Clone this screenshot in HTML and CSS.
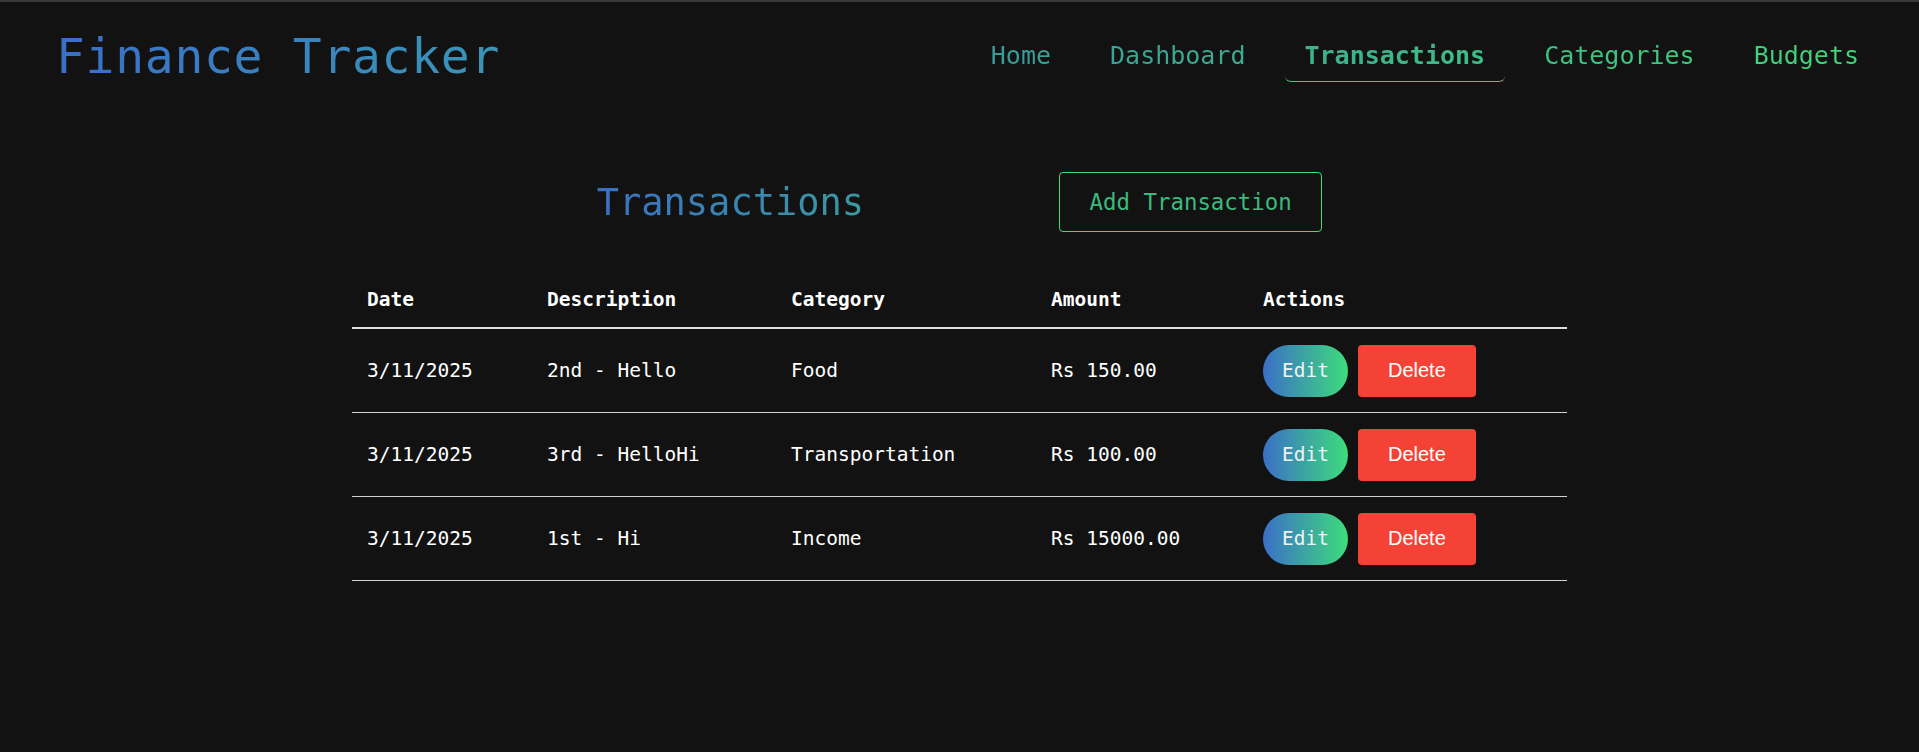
FILE: index.html
```html
<!DOCTYPE html>
<html lang="en">
<head>
<meta charset="utf-8">
<title>Finance Tracker</title>
<link rel="stylesheet" href="styles.css">
</head>
<body>
<header class="site-header">
  <h1 class="brand">Finance Tracker</h1>
  <nav class="nav">
    <a class="nav-link" href="#">Home</a>
    <a class="nav-link" href="#">Dashboard</a>
    <a class="nav-link active" href="#">Transactions</a>
    <a class="nav-link" href="#">Categories</a>
    <a class="nav-link" href="#">Budgets</a>
  </nav>
</header>
<main class="content">
  <div class="toolbar">
    <h2 class="page-title">Transactions</h2>
    <button class="add-btn">Add Transaction</button>
  </div>
  <table class="tx-table">
    <colgroup>
      <col class="c-date">
      <col class="c-desc">
      <col class="c-cat">
      <col class="c-amt">
      <col class="c-act">
    </colgroup>
    <thead>
      <tr><th>Date</th><th>Description</th><th>Category</th><th>Amount</th><th>Actions</th></tr>
    </thead>
    <tbody>
      <tr>
        <td>3/11/2025</td><td>2nd - Hello</td><td>Food</td><td>Rs 150.00</td>
        <td><div class="actions"><button class="edit-btn">Edit</button><button class="del-btn">Delete</button></div></td>
      </tr>
      <tr>
        <td>3/11/2025</td><td>3rd - HelloHi</td><td>Transportation</td><td>Rs 100.00</td>
        <td><div class="actions"><button class="edit-btn">Edit</button><button class="del-btn">Delete</button></div></td>
      </tr>
      <tr>
        <td>3/11/2025</td><td>1st - Hi</td><td>Income</td><td>Rs 15000.00</td>
        <td><div class="actions"><button class="edit-btn">Edit</button><button class="del-btn">Delete</button></div></td>
      </tr>
    </tbody>
  </table>
</main>
</body>
</html>
```
FILE: styles.css
```css
html, body {
  margin: 0;
  padding: 0;
}
body {
  background: #121212;
  border-top: 2px solid #3a3a3c;
  color: #ffffff;
  font-family: "DejaVu Sans Mono", "Liberation Mono", monospace;
  min-height: 750px;
}

.site-header {
  display: flex;
  justify-content: space-between;
  align-items: center;
  padding: 26px 40px 0 56px;
}

.brand {
  margin: 0;
  font-size: 48px;
  font-weight: normal;
  letter-spacing: 0.7px;
  background: linear-gradient(90deg, #3a6fc8 0%, #3a95b6 100%);
  -webkit-background-clip: text;
  background-clip: text;
  color: transparent;
}

.nav {
  display: flex;
  gap: 19px;
  background: linear-gradient(90deg, #3a9a9a 0%, #40d878 100%);
  -webkit-background-clip: text;
  background-clip: text;
}

.nav-link {
  font-size: 25px;
  padding: 11px 20px;
  color: transparent;
  text-decoration: none;
  border-bottom: 1px solid transparent;
  border-radius: 6px;
}

.nav-link.active {
  font-weight: bold;
  border-bottom-color: #3ecb80;
}

.content {
  width: 1215px;
  margin: 88px auto 0;
}

.toolbar {
  display: flex;
  justify-content: center;
  align-items: center;
  gap: 195px;
  margin-bottom: 40px;
}

.page-title {
  margin: 0;
  font-size: 37px;
  font-weight: normal;
  background: linear-gradient(90deg, #3a6fc2 0%, #3a9aa0 100%);
  -webkit-background-clip: text;
  background-clip: text;
  color: transparent;
}

.add-btn {
  font-family: "DejaVu Sans Mono", "Liberation Mono", monospace;
  font-size: 22.4px;
  line-height: 26px;
  padding: 16px 29.5px;
  background: transparent;
  color: #3cba7e;
  border: 1px solid #3ddc7c;
  border-radius: 4px;
}

.tx-table {
  width: 100%;
  border-collapse: collapse;
  table-layout: fixed;
  font-size: 19.5px;
}

.c-date { width: 180px; }
.c-desc { width: 244px; }
.c-cat { width: 260px; }
.c-amt { width: 212px; }
.c-act { width: 319px; }

.tx-table th {
  text-align: left;
  font-weight: bold;
  padding: 16px 15px;
  border-bottom: 2px solid #dddddd;
}

.tx-table td {
  text-align: left;
  padding: 15.5px 15px;
  border-bottom: 1px solid #d0d0d0;
  vertical-align: middle;
}

.actions {
  display: flex;
  gap: 10px;
}

.edit-btn {
  font-family: "DejaVu Sans Mono", "Liberation Mono", monospace;
  font-size: 19.5px;
  line-height: 23px;
  padding: 14.5px 19px;
  border: none;
  border-radius: 26px;
  color: #eef2f4;
  background: linear-gradient(90deg, #3b6fc6 0%, #3ddc7c 100%);
}

.del-btn {
  font-family: "Liberation Sans", Arial, sans-serif;
  font-size: 20px;
  line-height: 23px;
  padding: 14.5px 30px;
  border: none;
  border-radius: 4px;
  color: #ffffff;
  background: #f44336;
}
```
